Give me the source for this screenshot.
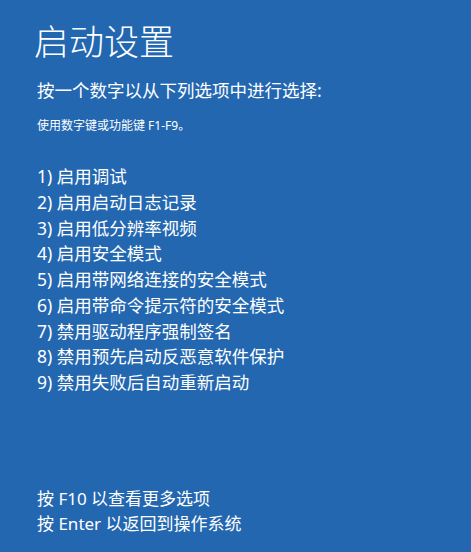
const items = [
  '1) 启用调试',
  '2) 启用启动日志记录',
  '3) 启用低分辨率视频',
  '4) 启用安全模式',
  '5) 启用带网络连接的安全模式',
  '6) 启用带命令提示符的安全模式',
  '7) 禁用驱动程序强制签名',
  '8) 禁用预先启动反恶意软件保护',
  '9) 禁用失败后自动重新启动',
]

export default function App() {
  return (
    <div
      className="w-[471px] h-[552px] bg-[#2367b1] text-white overflow-hidden"
      style={{ fontFamily: '"Noto Sans", "Noto Sans CJK SC", sans-serif' }}
    >
      <div className="pl-[37px] pt-[22px]">
        <h1 className="-ml-[3px] text-[35px] leading-[40px] font-light">启动设置</h1>
        <p className="mt-[16px] text-[17.5px] leading-[24px]">按一个数字以从下列选项中进行选择:</p>
        <p className="mt-[15px] text-[12px] leading-[18px]">使用数字键或功能键 F1-F9。</p>

        {/* Options */}
        <ul className="mt-[29px]">
          {items.map(item => (
            <li key={item} className="text-[17.5px] leading-[25.75px]">
              {item}
            </li>
          ))}
        </ul>

        {/* Footer */}
        <div className="mt-[90px] text-[17px] leading-[25px]">
          <p>按 F10 以查看更多选项</p>
          <p>按 Enter 以返回到操作系统</p>
        </div>
      </div>
    </div>
  )
}
